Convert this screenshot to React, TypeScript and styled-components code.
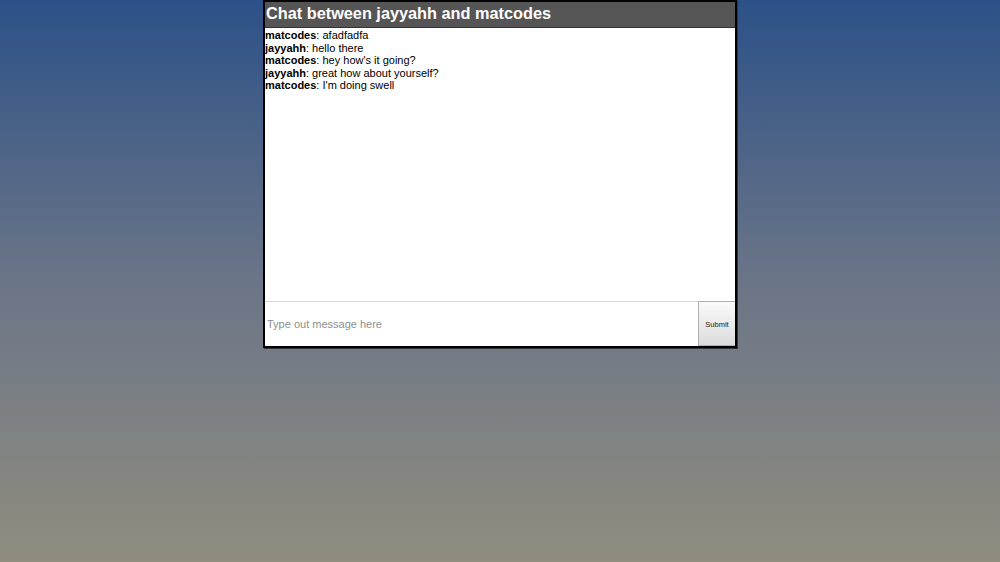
import React from 'react';
import styled, { createGlobalStyle } from 'styled-components';

const GlobalStyle = createGlobalStyle`
  html, body {
    margin: 0;
    padding: 0;
    height: 100%;
  }
  body {
    background: linear-gradient(to bottom, #2c5188 0%, #6b7587 50%, #908d7f 100%);
    font-family: "Liberation Sans", Arial, sans-serif;
  }
  #root {
    height: 100%;
  }
`;

interface Message {
    user: string;
    text: string;
}

const messages: Message[] = [
    { user: 'matcodes', text: 'afadfadfa' },
    { user: 'jayyahh', text: 'hello there' },
    { user: 'matcodes', text: "hey how's it going?" },
    { user: 'jayyahh', text: 'great how about yourself?' },
    { user: 'matcodes', text: "I'm doing swell" },
];

const App: React.FC = () => {
    return (
        <>
            <GlobalStyle />
            <Page>
                <ChatBox>
                    <Header>Chat between jayyahh and matcodes</Header>
                    <MessageList>
                        {messages.map((m, i) => (
                            <Line key={i}>
                                <Name>{m.user}</Name>: {m.text}
                            </Line>
                        ))}
                    </MessageList>
                    <InputRow>
                        <MessageInput placeholder="Type out message here" />
                        <SubmitButton>Submit</SubmitButton>
                    </InputRow>
                </ChatBox>
            </Page>
        </>
    );
};

const Page = styled.div`
  display: flex;
  justify-content: center;
  height: 100%;
`;

const ChatBox = styled.div`
  width: 470px;
  height: 344px;
  border: 2px solid #000;
  box-shadow: 1px 1px 0 #333;
  background: #fff;
  display: flex;
  flex-direction: column;
`;

const Header = styled.div`
  background: #555555;
  color: #fff;
  font-size: 16.3px;
  font-weight: bold;
  height: 26px;
  line-height: 22px;
  padding: 0 1px;
  border-bottom: 1px solid #333;
  box-sizing: border-box;
`;

const MessageList = styled.div`
  flex: 1;
  padding: 1px 0 0 0;
  font-size: 11px;
  line-height: 12.5px;
  color: #000;
  overflow-y: auto;
`;

const Line = styled.div``;

const Name = styled.b`
  font-weight: bold;
`;

const InputRow = styled.div`
  display: flex;
  height: 45px;
  border-top: 1px solid #d6d6d6;
  box-sizing: border-box;
`;

const MessageInput = styled.input`
  flex: 1;
  border: none;
  outline: none;
  padding: 0 2px;
  font-family: "Liberation Sans", Arial, sans-serif;
  font-size: 11px;
  color: #000;

  &::placeholder {
    color: #8f8f8f;
  }
`;

const SubmitButton = styled.button`
  width: 37px;
  margin-top: -1px;
  border: 1px solid #b0b0b0;
  border-right: none;
  background: linear-gradient(to bottom, #fafafa, #dcdcdc);
  font-family: "Liberation Sans", Arial, sans-serif;
  font-size: 7.5px;
  color: #222;
  padding: 2px 0 0 0;
  cursor: pointer;
`;

export default App;
